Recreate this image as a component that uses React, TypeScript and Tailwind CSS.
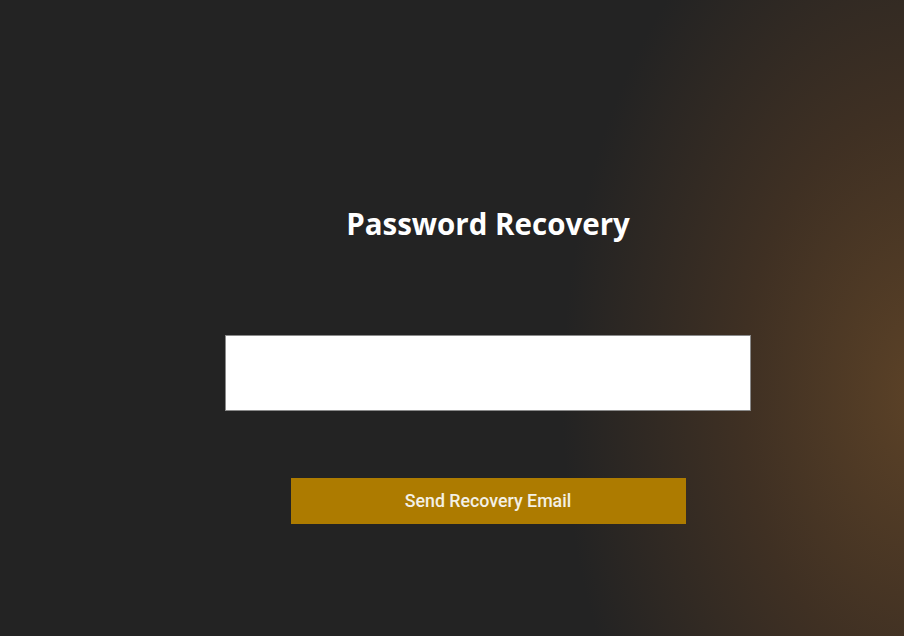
export default function App() {
  return (
    <div className="h-[636px] w-full overflow-hidden bg-[#232323] bg-[radial-gradient(ellipse_360px_560px_at_102%_62%,#5c4227_0%,#3f3023_50%,#232323_100%)]">
      <div className="ml-[225px] flex w-[526px] flex-col items-center pt-[204px]">
        <h1 className="font-['Open_Sans',sans-serif] text-[29.5px] font-bold leading-[40px] text-white">
          Password Recovery
        </h1>
        <input
          type="email"
          className="mt-[91px] h-[76px] w-[526px] border border-[#8a8a8a] bg-white px-3 outline-none"
        />
        <button className="mt-[67px] h-[46px] w-[395px] bg-[#ad7b00] font-['Roboto',sans-serif] text-[17.8px] font-medium text-[#f3f0e6]">
          Send Recovery Email
        </button>
      </div>
    </div>
  );
}
